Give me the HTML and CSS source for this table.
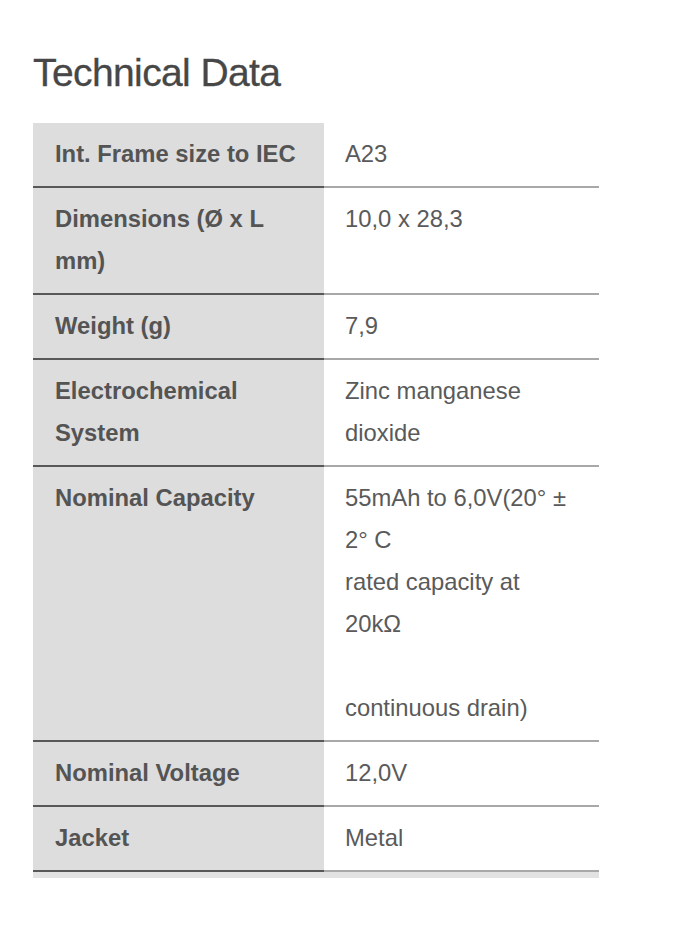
FILE: index.html
```html
<!DOCTYPE html>
<html lang="en">
<head>
<meta charset="utf-8">
<title>Technical Data</title>
<link rel="stylesheet" href="styles.css">
</head>
<body>
<section class="tech">
  <h2 class="tech-title">Technical Data</h2>
  <div class="table-wrap">
    <table class="spec">
      <tbody>
        <tr><th>Int. Frame size to IEC</th><td>A23</td></tr>
        <tr><th>Dimensions (Ø x L<br>mm)</th><td>10,0 x 28,3</td></tr>
        <tr><th>Weight (g)</th><td>7,9</td></tr>
        <tr><th>Electrochemical<br>System</th><td>Zinc manganese<br>dioxide</td></tr>
        <tr><th>Nominal Capacity</th><td>55mAh to 6,0V(20° ±<br>2° C<br>rated capacity at<br>20kΩ<br><br>continuous drain)</td></tr>
        <tr><th>Nominal Voltage</th><td>12,0V</td></tr>
        <tr><th>Jacket</th><td>Metal</td></tr>
      </tbody>
    </table>
  </div>
</section>
</body>
</html>
```
FILE: styles.css
```css
html, body {
  margin: 0;
  padding: 0;
  background: #ffffff;
}
body {
  font-family: "Liberation Sans", Arial, sans-serif;
  color: #555555;
}
.tech {
  padding: 51px 0 0 33px;
}
.tech-title {
  margin: 0 0 28px 0;
  font-size: 39px;
  line-height: 44px;
  font-weight: normal;
  color: #474747;
  letter-spacing: -0.6px;
  -webkit-text-stroke: 0.3px #474747;
}
.table-wrap {
  width: 566px;
  border-bottom: 6px solid #e2e2e2;
}
.spec {
  border-collapse: collapse;
  width: 566px;
  font-size: 23.8px;
  line-height: 42px;
}
.spec th,
.spec td {
  text-align: left;
  vertical-align: top;
  padding: 10px 22px 11px 22px;
}
.spec th {
  width: 247px;
  background: #dddddd;
  font-weight: bold;
  color: #545454;
  border-bottom: 2px solid #585858;
}
.spec td {
  font-weight: normal;
  color: #5a5a5a;
  border-bottom: 2px solid #a8a8a8;
  padding-left: 21px;
}
```
